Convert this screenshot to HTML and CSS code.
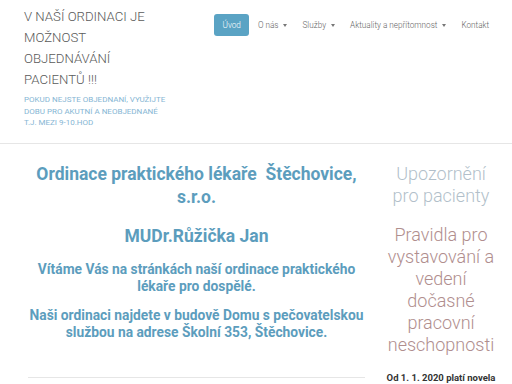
FILE: index.html
```html
<!DOCTYPE html>
<html lang="cs">
<head>
    <meta charset="UTF-8">
    <meta name="viewport" content="width=device-width, initial-scale=1.0">
    <title>Ordinace praktického lékaře Štěchovice</title>
    <link rel="stylesheet" href="styles.css">
</head>
<body>
    <header class="site-header">
        <div class="brand">
            <h1 class="brand-title">V NAŠÍ ORDINACI JE MOŽNOST OBJEDNÁVÁNÍ PACIENTŮ !!!</h1>
            <p class="brand-note">POKUD NEJSTE OBJEDNANÍ, VYUŽIJTE<br>DOBU PRO AKUTNÍ A NEOBJEDNANÉ<br>T.J. MEZI 9-10.HOD</p>
        </div>
        <nav class="menu">
            <a class="menu-item active" href="#">Úvod</a>
            <a class="menu-item" href="#">O nás <span class="caret"></span></a>
            <a class="menu-item" href="#">Služby <span class="caret"></span></a>
            <a class="menu-item" href="#">Aktuality a nepřítomnost <span class="caret"></span></a>
            <a class="menu-item" href="#">Kontakt</a>
        </nav>
    </header>

    <main class="content">
        <section class="main-col">
            <h2 class="title">Ordinace praktického lékaře&nbsp; Štěchovice, s.r.o.</h2>
            <h2 class="title doctor">MUDr.Růžička Jan</h2>
            <p class="lead">Vítáme Vás na stránkách naší ordinace praktického lékaře pro dospělé.</p>
            <p class="lead">Naši ordinaci najdete v budově Domu s pečovatelskou službou na adrese Školní 353, Štěchovice.</p>
            <hr class="divider">
        </section>
        <aside class="side-col">
            <h3 class="side-title">Upozornění pro pacienty</h3>
            <h3 class="side-rules">Pravidla pro vystavování a vedení dočasné pracovní neschopnosti</h3>
            <p class="side-text">Od 1. 1. 2020 platí novela</p>
        </aside>
    </main>
</body>
</html>
```

FILE: styles.css
```css
:root {
    --accent: #5aa3c4;
    --title-blue: #5c9dbd;
    --note-blue: #86b6d4;
    --text-gray: #5a5a5a;
    --line: #e6e6e6;
}

body {
    margin: 0;
    font-family: Roboto, "Liberation Sans", sans-serif;
    background: #fff;
    color: var(--text-gray);
    overflow: hidden;
}

.site-header {
    display: flex;
    align-items: flex-start;
    padding: 6px 0 14px 24px;
    border-bottom: 1px solid var(--line);
}

.brand {
    width: 150px;
    flex-shrink: 0;
}

.brand-title {
    margin: 0;
    font-size: 13.2px;
    font-weight: 300;
    line-height: 21px;
    color: var(--text-gray);
}

.brand-note {
    margin: 4px 0 0;
    font-size: 8px;
    line-height: 11.5px;
    color: var(--note-blue);
    white-space: nowrap;
}

.menu {
    display: flex;
    align-items: center;
    margin-left: 40px;
    margin-top: 8px;
}

.menu-item {
    font-size: 8.2px;
    line-height: 10px;
    font-weight: 300;
    color: #666;
    text-decoration: none;
    padding: 6px 7.5px;
    border-radius: 3px;
    white-space: nowrap;
}

.menu-item.active {
    background: var(--accent);
    color: #fff;
    padding: 6px 8.5px;
    margin-right: 1px;
}

.caret {
    display: inline-block;
    border-left: 2.5px solid transparent;
    border-right: 2.5px solid transparent;
    border-top: 3px solid #777;
    vertical-align: middle;
    margin-left: 3px;
}

.content {
    display: flex;
    gap: 20px;
    padding: 19px 0 0 28px;
}

.main-col {
    width: 337px;
    flex-shrink: 0;
    text-align: center;
}

.title {
    margin: 0;
    font-size: 17.5px;
    line-height: 23px;
    font-weight: 700;
    color: var(--title-blue);
}

.doctor {
    margin-top: 16px;
}

.lead {
    margin: 12px 0 0;
    font-size: 13.8px;
    line-height: 17px;
    font-weight: 700;
    color: var(--title-blue);
}

.lead:first-of-type {
    margin-top: 13px;
}

.divider {
    margin: 36px 0 0;
    border: 0;
    border-top: 1px solid var(--line);
}

.side-col {
    width: 112px;
    flex-shrink: 0;
    text-align: center;
}

.side-title {
    margin: 0;
    font-size: 18px;
    line-height: 22px;
    font-weight: 300;
    color: #b2bfca;
}

.side-rules {
    margin: 17px 0 0;
    font-size: 18px;
    line-height: 22px;
    font-weight: 300;
    color: #b08e8e;
}

.side-text {
    margin: 16px 0 0;
    font-size: 9.5px;
    line-height: 12px;
    font-weight: 700;
    color: #333;
    white-space: nowrap;
}
```
